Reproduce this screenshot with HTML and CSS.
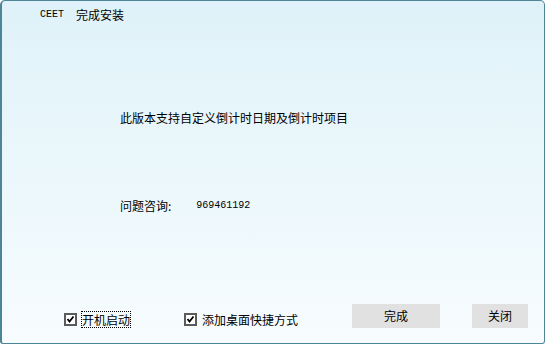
FILE: index.html
```html
<!DOCTYPE html>
<html>
<head>
<meta charset="utf-8">
<link rel="stylesheet" href="styles.css">
</head>
<body>
<div class="window">
  <div class="titlebar">
    <span class="app">CEET</span>
    <span class="title">完成安装</span>
  </div>
  <div class="content">
    <p class="line intro">此版本支持自定义倒计时日期及倒计时项目</p>
    <p class="line contact"><span>问题咨询:</span><span class="qq">969461192</span></p>
  </div>
  <div class="footer">
    <div class="checks">
      <label class="check">
        <svg class="box" width="13" height="13" viewBox="0 0 13 13"><rect x="1" y="1" width="11" height="11" fill="#fff" stroke="#5a5a5a" stroke-width="2"/><path d="M3.5 6 L5.5 8.5 L9.5 3.5" fill="none" stroke="#000" stroke-width="1.8"/></svg>
        <span class="text focus">开机启动</span>
      </label>
      <label class="check second">
        <svg class="box" width="13" height="13" viewBox="0 0 13 13"><rect x="1" y="1" width="11" height="11" fill="#fff" stroke="#5a5a5a" stroke-width="2"/><path d="M3.5 6 L5.5 8.5 L9.5 3.5" fill="none" stroke="#000" stroke-width="1.8"/></svg>
        <span class="text">添加桌面快捷方式</span>
      </label>
    </div>
    <div class="buttons">
      <button class="btn wide">完成</button>
      <button class="btn narrow">关闭</button>
    </div>
  </div>
</div>
</body>
</html>
```
FILE: styles.css
```css
html, body {
  margin: 0;
  padding: 0;
  background: #ffffff;
}
.window {
  width: 545px;
  height: 344px;
  box-sizing: border-box;
  border: 1px solid #4c8596;
  border-left-width: 2px;
  border-radius: 5px 5px 3px 3px;
  background: linear-gradient(#dff2f9 0%, #eaf7fb 45%, #f7fcfe 100%);
  display: flex;
  flex-direction: column;
  font-family: "Noto Sans CJK SC", "Noto Sans", sans-serif;
  font-size: 12px;
  color: #000;
}
.titlebar {
  display: flex;
  align-items: center;
  padding: 7px 0 0 38px;
  height: 14px;
  line-height: 14px;
}
.app {
  font-family: "Liberation Mono", "DejaVu Sans Mono", monospace;
  font-size: 10px;
  margin-right: 12px;
}
.title {
  font-size: 12px;
}
.content {
  padding-left: 118px;
}
.line {
  margin: 0;
  line-height: 14px;
  height: 14px;
}
.intro {
  margin-top: 89px;
}
.contact {
  margin-top: 74px;
  display: flex;
  align-items: center;
}
.qq {
  font-family: "Liberation Mono", "DejaVu Sans Mono", monospace;
  font-size: 10px;
  margin-left: 25px;
}
.footer {
  margin-top: auto;
  display: flex;
  align-items: center;
  padding: 0 16px 15px 62px;
}
.checks {
  display: flex;
  align-items: center;
  padding-top: 8px;
}
.check {
  display: flex;
  align-items: center;
}
.check.second {
  margin-left: 53px;
}
.box {
  display: block;
  margin-right: 4px;
}
.text {
  line-height: 15px;
  padding: 0;
  border: 1px dotted transparent;
}
.text.focus {
  border-color: #000;
}
.buttons {
  margin-left: auto;
  display: flex;
  gap: 32px;
}
.btn {
  height: 24px;
  border: none;
  background: #e1e1e1;
  font-family: "Noto Sans CJK SC", "Noto Sans", sans-serif;
  font-size: 12px;
  color: #000;
  padding: 0;
}
.btn.wide {
  width: 88px;
}
.btn.narrow {
  width: 56px;
}
```
